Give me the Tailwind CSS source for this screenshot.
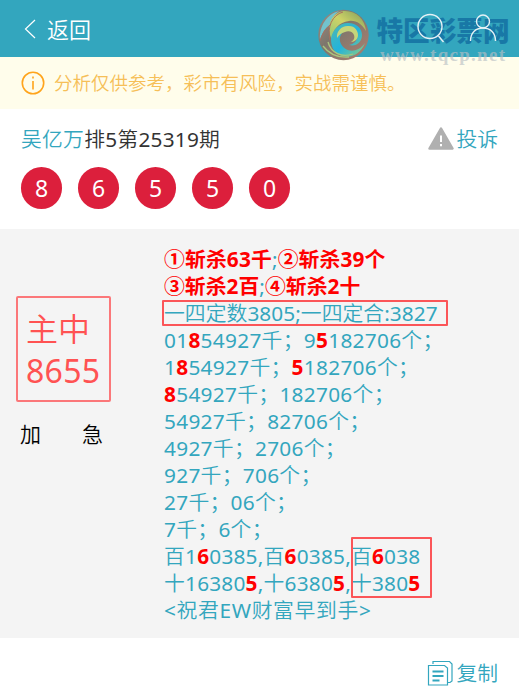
<!DOCTYPE html>
<html lang="zh-CN">
<head>
  <meta charset="UTF-8" />
  <meta name="viewport" content="width=device-width, initial-scale=1.0"/>
  <title>吴亿万排5第25319期</title>
  <script src="https://cdn.jsdelivr.net/npm/@tailwindcss/browser@4"></script>
  <style>
    body { font-family: 'Noto Sans', 'Noto Sans CJK SC DemiLight', 'Noto Sans CJK SC Light', 'Noto Sans CJK SC', sans-serif; }
    b { font-family: 'Noto Sans', 'Noto Sans CJK SC', sans-serif; color: #f00; }
  </style>
</head>
<body class="bg-white w-[519px] h-[689px] overflow-hidden text-[20.8px] text-[#33a6be]">

  <!-- Top bar -->
  <header class="relative h-[57px] bg-[#33a6be] flex items-center pl-6 text-white">
    <svg class="w-3 h-5" viewBox="0 0 12 20" fill="none" stroke="currentColor" stroke-width="1.2"><path d="M11 1 1.500 10 11 19"/></svg>
    <span class="ml-[11px] text-[22px] leading-[30px]">返回</span>

    <!-- Site logo over the search and user icons -->
    <svg class="absolute left-[316px] top-[7px] w-[203px] h-[58px]" viewBox="0 0 203 58">
      <defs>
        <linearGradient id="rim" x1="0" y1="0" x2="1" y2="1">
          <stop offset="0" stop-color="#a08d84"/><stop offset=".4" stop-color="#7d766c"/><stop offset="1" stop-color="#ae7f70"/>
        </linearGradient>
        <linearGradient id="band" x1="0" y1="1" x2="1" y2="0">
          <stop offset="0" stop-color="#8fc578"/><stop offset=".5" stop-color="#cfd366"/><stop offset="1" stop-color="#7e9a5c"/>
        </linearGradient>
        <linearGradient id="sea" x1="0" y1="0" x2="1" y2="1">
          <stop offset="0" stop-color="#4fb8b0"/><stop offset=".5" stop-color="#22b3dc"/><stop offset="1" stop-color="#93cf7c"/>
        </linearGradient>
      </defs>
      <circle cx="27.500" cy="28" r="25.200" fill="url(#rim)"/>
      <!-- pale crescent on the left -->
      <path d="M4 33C3 19 11 7 23 4c-5 4-8 8-9 14-5 3-8 8-10 15Z" fill="#72c3cd"/>
      <!-- yellow-green band -->
      <path d="M16 33C10 20 14 7 27 4c13-1 22 8 23 20-4-7-10-11-17-10-10 1-17 9-17 19Z" fill="url(#band)"/>
      <!-- blue bowl and inner hook -->
      <path d="M15 32c1-9 8-16 17-16 9 0 14 6 14 12 0 7-6 12-13 10 5-1 8-4 8-8 0-5-4-8-9-7-7 1-10 8-7 14 5 9 17 9 24-1-5 13-18 17-27 11-5-3-7-9-7-15Z" fill="url(#sea)"/>
      <path d="M21 31c-1-7 5-13 12-12 6 0 9 5 9 9 0 4-3 7-7 7 3-2 4-4 3-7-1-3-5-5-9-3-4 1-6 3-8 6Z" fill="#c5d57a"/>
      <path d="M12 35c3 11 14 16 25 12M7 39c6 8 15 12 26 11" fill="none" stroke="#a9c77d" stroke-width="1.300"/>
      <path d="M4 34c2-7 6-13 10-16M14 33C11 20 16 8 27 5" fill="none" stroke="#a8715f" stroke-width="1"/>
      <text x="60.500" y="34" font-family="Noto Sans CJK SC" font-size="27" font-weight="900" textLength="133" lengthAdjust="spacingAndGlyphs" fill="#1878a6">特区彩票网</text>
      <text x="64" y="53.500" font-family="Liberation Serif, serif" font-size="19" font-weight="700" textLength="125" fill="#b8bfc4" fill-opacity=".65">www.tqcp.net</text>
      <g fill="none" stroke="#e6f1f6" stroke-width="1.400">
        <circle cx="114" cy="19.500" r="12"/><path d="m122.500 29 5 6"/>
        <circle cx="167" cy="14.500" r="6.500"/><path d="M154.500 34c0-8 5-13 12.500-13s12.500 5 12.500 13"/>
      </g>
    </svg>
  </header>

  <!-- Risk notice -->
  <div class="h-[52px] bg-[#fffdeb] flex items-center pl-[21px] text-[#f6bf58]">
    <svg class="w-6 h-6" viewBox="0 0 24 24" fill="none" stroke="#ffa41c" stroke-width="1.6"><circle cx="12" cy="12" r="10.700"/><path d="M12 10v8.500M12 5.500v2"/></svg>
    <span class="ml-[9px] text-[18.5px]">分析仅供参考，彩市有风险，实战需谨慎。</span>
  </div>

  <!-- Post title and draw result -->
  <section class="h-[120px] px-[21px] pt-[14px]">
    <div class="flex items-center justify-between h-8">
      <h1 class="leading-8 tracking-[0.25px]">吴亿万<span class="text-[#333]">排5第25319期</span></h1>
      <div class="flex items-center gap-[2px]">
        <svg class="w-[26px] h-[23px] -mt-0.5" viewBox="0 0 26 23"><path d="M13 1.500 24.500 21.500H1.500Z" fill="#b0b0b0" stroke="#b0b0b0" stroke-width="2.500" stroke-linejoin="round"/><path d="M13 8.500v6.500M13 17v2.200" stroke="#fff" stroke-width="2"/></svg>
        <span class="leading-8">投诉</span>
      </div>
    </div>
    <div class="flex gap-4 mt-3 text-white text-[23px]">
      <span class="w-[41px] h-[42px] rounded-full bg-[#dc1f3c] flex items-center justify-center">8</span>
      <span class="w-[41px] h-[42px] rounded-full bg-[#dc1f3c] flex items-center justify-center">6</span>
      <span class="w-[41px] h-[42px] rounded-full bg-[#dc1f3c] flex items-center justify-center">5</span>
      <span class="w-[41px] h-[42px] rounded-full bg-[#dc1f3c] flex items-center justify-center">5</span>
      <span class="w-[41px] h-[42px] rounded-full bg-[#dc1f3c] flex items-center justify-center">0</span>
    </div>
  </section>

  <!-- Analysis -->
  <main class="relative h-[409px] bg-[#f4f4f4] flex">
    <div class="w-[164px] pt-[67px] pl-4">
      <div class="w-[95px] h-[106px] border-2 border-[#fb7779] rounded-[2px] pl-2 pt-[10px] text-[32px] leading-[42px] text-[#ff5252]">
        <p>主中</p>
        <p class="tracking-[0.3px]">8655</p>
      </div>
      <p class="flex gap-[41px] pl-1 mt-4 text-[21px] leading-8 text-black"><span>加</span><span>急</span></p>
    </div>

    <div class="pt-[17px] leading-[27px] whitespace-nowrap tracking-[0.3px]">
      <p class="tracking-[0.15px]"><b>①斩杀63千</b>;<b>②斩杀39个</b></p>
      <p class="tracking-[0.05px]"><b>③斩杀2百</b>;<b>④斩杀2十</b></p>
      <p class="tracking-[0.05px]">一四定数3805;一四定合:3827</p>
      <p>01<b>8</b>54927千；9<b>5</b>182706个；</p>
      <p>1<b>8</b>54927千；<b>5</b>182706个；</p>
      <p><b>8</b>54927千；182706个；</p>
      <p>54927千；82706个；</p>
      <p>4927千；2706个；</p>
      <p>927千；706个；</p>
      <p>27千；06个；</p>
      <p>7千；6个；</p>
      <p class="tracking-[0.22px]">百1<b>6</b>0385,百<b>6</b>0385,百<b>6</b>038</p>
      <p class="tracking-[0.22px]">十16380<b>5</b>,十6380<b>5</b>,十380<b>5</b></p>
      <p class="tracking-[0.65px]">&lt;祝君EW财富早到手&gt;</p>
    </div>

    <!-- Marker frames -->
    <div class="absolute left-[162px] top-[71px] w-[286px] h-[26px] border-2 border-[#fb5558] rounded-[1px]"></div>
    <div class="absolute left-[351px] top-[308px] w-[81px] h-[61px] border-2 border-[#fb5558] rounded-[1px]"></div>
  </main>

  <!-- Copy -->
  <footer class="flex justify-end items-center gap-[3px] h-[51px] pt-[18px] pr-[21px]">
    <svg class="w-[26px] h-[26px]" viewBox="0 0 26 26" fill="none" stroke="currentColor" stroke-width="1.2"><path d="M6 4V1.500h16.500L25 4v17l-2 1.500h-2"/><path d="M1.500 5.500h16L20.500 8v17h-19Z"/><path d="M5.500 11.500h11M5.500 16h11M5.500 20.500h7" stroke-width="1.800"/></svg>
    <span class="leading-8">复制</span>
  </footer>

</body>
</html>
